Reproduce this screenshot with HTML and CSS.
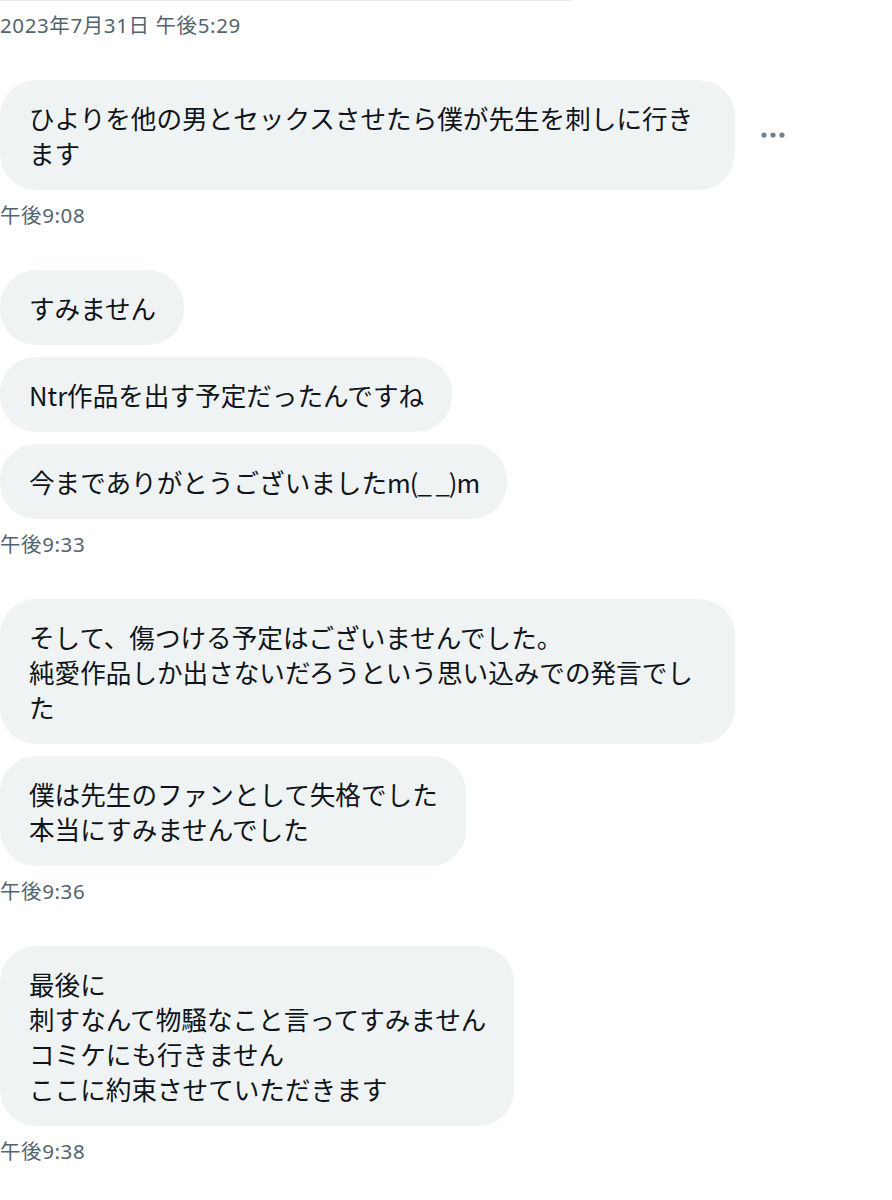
FILE: index.html
```html
<!DOCTYPE html>
<html lang="ja">
<head>
<meta charset="UTF-8">
<meta name="viewport" content="width=device-width, initial-scale=1.0">
<title>メッセージ</title>
<link rel="stylesheet" href="styles.css">
</head>
<body>

<div class="topline"></div>

<div class="thread">
  <div class="stamp">2023年7月31日 午後5:29</div>

  <div class="group">
    <div class="row">
      <div class="bubble">ひよりを他の男とセックスさせたら僕が先生を刺しに行きます</div>
      <div class="more">
        <svg width="24" height="6" viewBox="0 0 24 6"><circle cx="3" cy="3" r="2.6"/><circle cx="12" cy="3" r="2.6"/><circle cx="21" cy="3" r="2.6"/></svg>
      </div>
    </div>
    <div class="stamp">午後9:08</div>
  </div>

  <div class="group">
    <div class="row"><div class="bubble">すみません</div></div>
    <div class="row"><div class="bubble">Ntr作品を出す予定だったんですね</div></div>
    <div class="row"><div class="bubble">今までありがとうございました<span class="kao">m(_ _)m</span></div></div>
    <div class="stamp">午後9:33</div>
  </div>

  <div class="group">
    <div class="row"><div class="bubble">そして、傷つける予定はございませんでした。<br>純愛作品しか出さないだろうという思い込みでの発言でした</div></div>
    <div class="row"><div class="bubble">僕は先生のファンとして失格でした<br>本当にすみませんでした</div></div>
    <div class="stamp">午後9:36</div>
  </div>

  <div class="group">
    <div class="row"><div class="bubble">最後に<br>刺すなんて物騒なこと言ってすみません<br>コミケにも行きません<br>ここに約束させていただきます</div></div>
    <div class="stamp">午後9:38</div>
  </div>
</div>

</body>
</html>
```

FILE: styles.css
```css
body {
  margin: 0;
  background-color: #ffffff;
  font-family: "Noto Sans CJK JP", "Noto Sans", sans-serif;
  color: #0f1419;
}
.topline {
  width: 572px;
  height: 1px;
  background-color: #e6eaec;
}
.thread {
  display: flex;
  flex-direction: column;
}
.stamp {
  margin-top: 12px;
  font-family: "Noto Sans", "Noto Sans CJK JP", sans-serif;
  font-size: 20.5px;
  letter-spacing: 0.6px;
  line-height: 24px;
  color: #536471;
}
.group {
  margin-top: 43px;
  display: flex;
  flex-direction: column;
  gap: 12px;
}
.group .stamp {
  margin-top: 1px;
}
.row {
  display: flex;
  align-items: center;
}
.bubble {
  max-width: 678px;
  padding: 20px 28px 20px 29px;
  background-color: #eff3f4;
  border-radius: 36px;
  font-size: 25.6px;
  line-height: 35px;
}
.kao {
  letter-spacing: -1px;
}
.more {
  margin-left: 26px;
  display: flex;
  align-items: center;
}
.more svg {
  fill: #6f7f8c;
}
```
